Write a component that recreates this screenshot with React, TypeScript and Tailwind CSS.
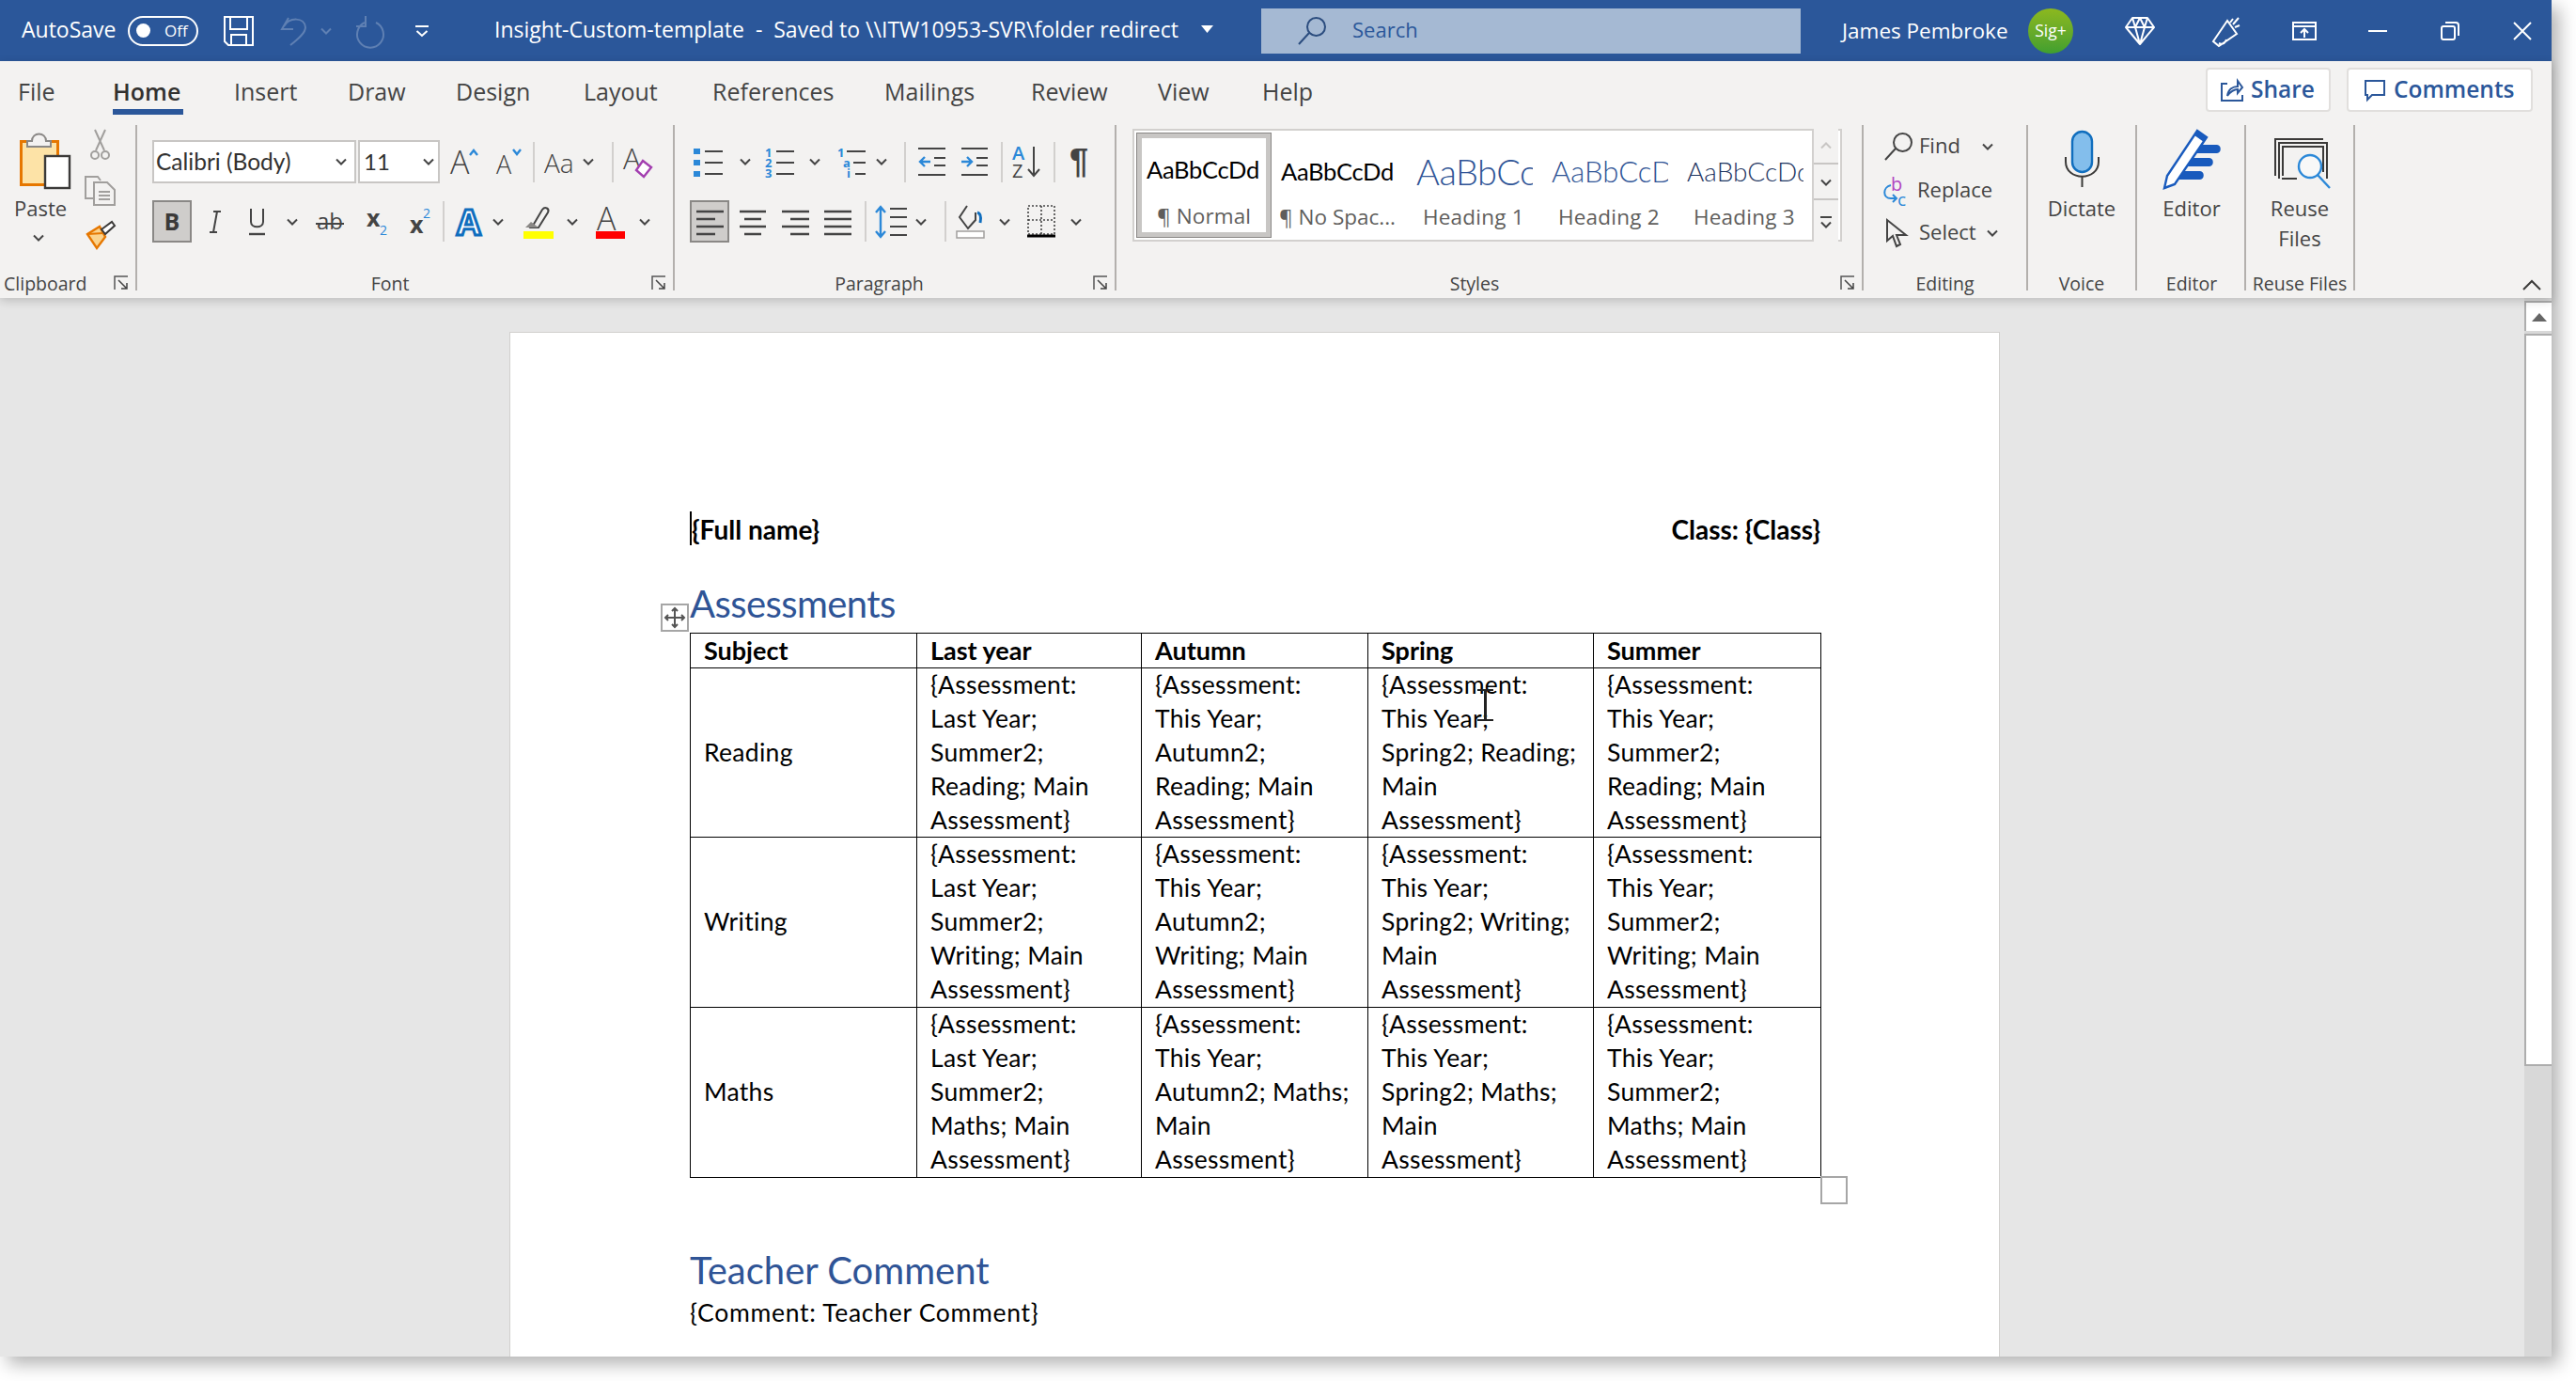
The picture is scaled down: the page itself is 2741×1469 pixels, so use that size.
import React from "react";

const D = "#444444";
const BL = "#2b88d8";
const F = "Open Sans, sans-serif";

function Sv({ w, h, cls = "", children }: { w: number; h: number; cls?: string; children?: React.ReactNode }) {
  return (
    <svg width={w} height={h} viewBox={`0 0 ${w} ${h}`} fill="none" className={`block shrink-0 overflow-visible ${cls}`}>
      {children}
    </svg>
  );
}
const Chev = ({ cls = "", color = D }: { cls?: string; color?: string }) => (
  <Sv w={12} h={8} cls={cls}><path d="M1 1.5L6 6.5L11 1.5" stroke={color} strokeWidth="2" /></Sv>
);
const Launcher = ({ cls = "" }: { cls?: string }) => (
  <Sv w={16} h={16} cls={cls}><path d="M1 15V1H15" stroke="#555" strokeWidth="1.5" /><path d="M5 5L14 14M14 8V14H8" stroke="#444" strokeWidth="1.5" /></Sv>
);
const Sep1 = ({ cls = "" }: { cls?: string }) => <div className={`w-[2px] h-[43px] bg-[#d2d0ce] shrink-0 ${cls}`} />;

const Lines = ({ d }: { d: string }) => <Sv w={29} h={28}><path d={d} stroke={D} strokeWidth="2.4" /></Sv>;

function TitleBar() {
  return (
    <div className="h-[65px] bg-[#2b579a] flex items-center text-white shrink-0 text-[23px]">
      <span className="ml-[23px] w-[100px] whitespace-nowrap -mt-[2px]">AutoSave</span>
      <div className="ml-[13px] w-[75px] h-[32px] rounded-full border-2 border-white flex items-center shrink-0">
        <div className="ml-[7px] w-[15px] h-[15px] rounded-full bg-white" />
        <span className="ml-[15px] text-[17px] leading-none">Off</span>
      </div>
      <Sv w={32} h={32} cls="ml-[27px]">
        <path d="M1 1H31V31H5L1 27Z" stroke="#fff" strokeWidth="2" />
        <path d="M7 1V14H25V1M8 31V20H24V31" stroke="#fff" strokeWidth="2" />
      </Sv>
      <Sv w={28} h={32} cls="ml-[28px]">
        <path d="M9 2L2 14H14M4 11C10 1 26 1 27 12C27 18 20 24 11 31" stroke="#5f80b3" strokeWidth="2" />
      </Sv>
      <Chev cls="ml-[15px]" color="#5f80b3" />
      <Sv w={32} h={32} cls="ml-[23px]">
        <path d="M12 7A14 14 0 1 0 24 7M13 0V11H3" stroke="#5f80b3" strokeWidth="2" />
      </Sv>
      <Sv w={14} h={14} cls="ml-[34px]"><path d="M0 2H14M1.5 7L7 12L12.5 7" stroke="#fff" strokeWidth="2" /></Sv>
      <span className="ml-[70px] w-[739px] whitespace-pre -mt-[3px]">Insight-Custom-template  -  Saved to \\ITW10953-SVR\folder redirect</span>
      <Sv w={13} h={8} cls="ml-[13px] -mt-[3px]"><path d="M0 0H13L6.5 8Z" fill="#fff" /></Sv>
      <div className="ml-[51px] w-[574px] h-[48px] bg-[#a5b9d3] flex items-center shrink-0 text-[#2b579a]">
        <Sv w={30} h={30} cls="ml-[39px]">
          <circle cx="19.5" cy="10.5" r="9.5" stroke="#2b4c7e" strokeWidth="2" />
          <path d="M12 17L1 29" stroke="#2b4c7e" strokeWidth="2" />
        </Sv>
        <span className="ml-[28px] text-[22px] -mt-[2px]">Search</span>
      </div>
      <span className="ml-[44px] w-[179px] whitespace-nowrap text-[22.5px]">James Pembroke</span>
      <div className="ml-[19px] w-[48px] h-[48px] rounded-full bg-gradient-to-b from-[#8cb81e] to-[#3f9f2f] flex items-center justify-center shrink-0 text-[17.5px]">Sig+</div>
      <Sv w={32} h={30} cls="ml-[55px]">
        <path d="M8 1H24L31 11L16 29L1 11ZM1 11H31M11 11L16 29L21 11L16 1L11 11M8 1L11 11M24 1L21 11" stroke="#fff" strokeWidth="2" strokeLinejoin="round" />
      </Sv>
      <Sv w={31} h={32} cls="ml-[61px]">
        <path d="M16 5L1 27L7 32L26 19ZM7 29C9 30 13 31 15 25M19 7L22 3M24 12L29 10M22 9L28 2" stroke="#fff" strokeWidth="2" />
      </Sv>
      <Sv w={26} h={20} cls="ml-[54px]">
        <path d="M1 1H25V19H1ZM1 5H25M13 17V8M9 12L13 8L17 12" stroke="#fff" strokeWidth="2" />
      </Sv>
      <div className="ml-[55px] w-[20px] h-[2px] bg-white shrink-0" />
      <Sv w={20} h={20} cls="ml-[57px]">
        <rect x="1" y="5" width="14" height="14" rx="2" stroke="#fff" strokeWidth="2" />
        <path d="M5 1H16C18 1 19 2 19 4V15" stroke="#fff" strokeWidth="2" />
      </Sv>
      <Sv w={20} h={20} cls="ml-[57px]"><path d="M1 1L19 19M19 1L1 19" stroke="#fff" strokeWidth="2" /></Sv>
    </div>
  );
}

const tabs: [string, string][] = [
  ["File", "w-[101px]"], ["Home", "w-[129px]"], ["Insert", "w-[121px]"], ["Draw", "w-[115px]"], ["Design", "w-[136px]"],
  ["Layout", "w-[137px]"], ["References", "w-[183px]"], ["Mailings", "w-[156px]"], ["Review", "w-[135px]"], ["View", "w-[111px]"], ["Help", "w-[60px]"],
];

function TabRow() {
  return (
    <div className="h-[68px] flex items-start pt-[14px] pl-[19px] shrink-0 text-[#444] text-[25px]">
      {tabs.map(([t, w]) => (
        <div key={t} className={`${w} shrink-0 h-[42px]`}>
          <span className={`inline-block h-[42px] leading-[34px] border-b-[6px] whitespace-nowrap ${t === "Home" ? "border-[#2b579a] font-semibold text-[#323130] w-[75px]" : "border-transparent"}`}>{t}</span>
        </div>
      ))}
      <div className="ml-auto flex mt-[-7px] text-[#2b579a] font-semibold text-[24.5px]">
        <div className="w-[133px] h-[47px] bg-white border-2 border-[#e1dfdd] rounded-[4px] flex items-center pl-[14px]">
          <Sv w={24} h={24}><path d="M7 5H1V23H23V17M7 18C8 11 13 8 18 8V2L23 9L18 15V11C13 11 10 14 7 18Z" stroke="#2b579a" strokeWidth="2" /></Sv>
          <span className="ml-[8px]">Share</span>
        </div>
        <div className="ml-[17px] mr-[20px] w-[198px] h-[47px] bg-white border-2 border-[#e1dfdd] rounded-[4px] flex items-center pl-[17px]">
          <Sv w={22} h={22}><path d="M1 1H21V16H8L3 21V16H1Z" stroke="#2b579a" strokeWidth="2" /></Sv>
          <span className="ml-[9px]">Comments</span>
        </div>
      </div>
    </div>
  );
}

function Label({ text, cls = "", launcher = true }: { text: string; cls?: string; launcher?: boolean }) {
  return (
    <div className="h-[24px] -mb-[5px] flex items-center text-[19.5px] leading-[23px] text-[#444] shrink-0">
      <div className={`flex-1 text-center whitespace-nowrap -mt-[1px] ${cls}`}>{text}</div>
      {launcher && <Launcher cls="mr-[7px] -mt-[3px]" />}
    </div>
  );
}

function Group({ w, children }: { w: string; children: React.ReactNode }) {
  return <div className={`${w} h-[176px] flex flex-col border-r-2 border-[#b3b0ad] shrink-0`}>{children}</div>;
}

const Tx = ({ x, y, s, c = D, w = 400, f = F, st, children }: { x: number; y: number; s: number; c?: string; w?: number; f?: string; st?: string; children: React.ReactNode }) => (
  <text x={x} y={y} fontSize={s} fill={c} fontWeight={w} fontFamily={f} fontStyle={st}>{children}</text>
);

function Clipboard() {
  return (
    <Group w="w-[146px]">
      <div className="flex-1 flex min-h-0">
        <div className="w-[90px] flex flex-col items-start shrink-0">
          <Sv w={54} h={59} cls="ml-[21px] mt-[9px]">
            <rect x="1.5" y="8.5" width="39" height="46" fill="#fde3a7" stroke="#e67700" strokeWidth="3" />
            <path d="M8 8H13C13 -2 28 -2 28 8H33V14H8Z" fill="#f3f2f1" stroke="#8a8886" strokeWidth="2" />
            <rect x="27" y="24" width="26" height="34" fill="#fff" stroke="#3b3a39" strokeWidth="2.4" />
          </Sv>
          <span className="ml-[15px] mt-[5px] text-[22px] leading-[30px] text-[#444]">Paste</span>
          <Chev cls="ml-[35px] mt-[13px]" />
        </div>
        <div className="flex flex-col">
          <Sv w={21} h={32} cls="ml-[6px] mt-[5px]">
            <path d="M5 0L15 22M16 0L6 22" stroke="#a19f9d" strokeWidth="2" />
            <circle cx="5" cy="27" r="4" stroke="#a19f9d" strokeWidth="2" />
            <circle cx="16" cy="27" r="4" stroke="#a19f9d" strokeWidth="2" />
          </Sv>
          <Sv w={33} h={32} cls="mt-[17px]">
            <path d="M10 24H1V1H14L17 5" stroke="#a19f9d" strokeWidth="2" />
            <path d="M10 7H24L32 15V31H10Z" fill="#f3f2f1" stroke="#a19f9d" strokeWidth="2" />
            <path d="M15 17H27M15 21H27M15 25H27" stroke="#a19f9d" strokeWidth="2" />
          </Sv>
          <Sv w={31} h={30} cls="ml-[2px] mt-[16px]">
            <path d="M1 14L14 6L20 17L11 29Z" fill="#fbd38d" stroke="#e67700" strokeWidth="2.4" />
            <path d="M1 14L18 13" stroke="#e67700" strokeWidth="2" />
            <path d="M16 9L27 1L30 5L20 14Z" fill="#fff" stroke="#3b3a39" strokeWidth="2" />
          </Sv>
        </div>
      </div>
      <div className="h-[24px] -mb-[5px] flex items-center text-[19.5px] text-[#444] shrink-0">
        <span className="ml-[4px] whitespace-nowrap -mt-[1px]">Clipboard</span>
        <Launcher cls="ml-auto mr-[7px] -mt-[3px]" />
      </div>
    </Group>
  );
}

function FontGroup() {
  return (
    <Group w="w-[572px]">
      <div className="flex-1 min-h-0 pt-[16px] flex flex-col">
        <div className="h-[46px] flex items-center">
          <div className="ml-[16px] w-[217px] h-[46px] bg-white border-2 border-[#c8c6c4] flex items-center justify-between pl-[2px] pr-[4px] text-[#323130] shrink-0">
            <span className="whitespace-nowrap font-['Lato',sans-serif] text-[24.5px]">Calibri (Body)</span><Chev cls="mr-[4px]" />
          </div>
          <div className="ml-[2px] w-[87px] h-[46px] bg-white border-2 border-[#c8c6c4] flex items-center justify-between px-[4px] text-[24px] text-[#323130] shrink-0 font-['Lato',sans-serif]">
            <span>11</span><Chev />
          </div>
          <Sv w={31} h={30} cls="ml-[11px]"><Tx x={0} y={28} s={34} w={300}>A</Tx><path d="M21 8L25 3L29 8" stroke={BL} strokeWidth="2.4" /></Sv>
          <Sv w={27} h={30} cls="ml-[18px]"><Tx x={0} y={28} s={27} w={300}>A</Tx><path d="M18 2L22 7L26 2" stroke={BL} strokeWidth="2.4" /></Sv>
          <Sep1 cls="ml-[12px]" />
          <Sv w={33} h={30} cls="ml-[10px]"><Tx x={0} y={27} s={28} w={300}>Aa</Tx></Sv>
          <Chev cls="ml-[8px]" />
          <Sep1 cls="ml-[19px]" />
          <Sv w={31} h={34} cls="ml-[10px]">
            <Tx x={0} y={25} s={31} w={300}>A</Tx>
            <path d="M21 16L30 23L22 33L14 26Z" fill="#fff" stroke="#a33fb0" strokeWidth="2.4" />
          </Sv>
        </div>
        <div className="h-[45px] mt-[18px] flex items-center">
          <div className="ml-[16px] w-[42px] h-[45px] bg-[#cfcdcb] border-2 border-[#8a8886] flex items-center justify-center text-[25px] font-bold text-[#3b3a39] shrink-0">B</div>
          <Sv w={14} h={26} cls="ml-[18px]"><path d="M5 2H13M1 24H9M9 2L5 24" stroke={D} strokeWidth="2" /></Sv>
          <Sv w={17} h={32} cls="ml-[29px]"><path d="M2 2V16C2 23 15 23 15 16V2" stroke={D} strokeWidth="2" /><path d="M0 29H17" stroke={D} strokeWidth="2.4" /></Sv>
          <Chev cls="ml-[23px]" />
          <Sv w={30} h={28} cls="ml-[19px]"><Tx x={1} y={22} s={24}>ab</Tx><path d="M0 16H30" stroke={D} strokeWidth="2" /></Sv>
          <Sv w={22} h={30} cls="ml-[24px]"><Tx x={0} y={20} s={25} w={700}>x</Tx><Tx x={14} y={29} s={14} c={BL}>2</Tx></Sv>
          <Sv w={22} h={30} cls="ml-[24px]"><Tx x={0} y={27} s={25} w={700}>x</Tx><Tx x={14} y={11} s={14} c={BL}>2</Tx></Sv>
          <Sep1 cls="ml-[13px]" />
          <Sv w={32} h={32} cls="ml-[10px]"><text x={3} y={30} fontSize={37} fontWeight={700} fontFamily={F} fill="#fff" stroke="#106ebe" strokeWidth="3">A</text></Sv>
          <Chev cls="ml-[9px]" />
          <div className="ml-[21px] w-[32px] h-[36px] flex flex-col justify-end shrink-0">
            <Sv w={32} h={26}><path d="M10 20L20 3C23 -1 28 2 26 6L16 22H8Z" stroke={D} strokeWidth="2" /><path d="M8 16L16 22H2Z" fill="#8a8886" /></Sv>
            <div className="h-[8px] bg-[#ffff00] w-[32px]" />
          </div>
          <Chev cls="ml-[14px]" />
          <div className="ml-[19px] w-[31px] h-[36px] flex flex-col justify-end shrink-0">
            <Sv w={31} h={27}><Tx x={1} y={26} s={34} w={300}>A</Tx></Sv>
            <div className="h-[8px] bg-[#ff0000] w-[31px]" />
          </div>
          <Chev cls="ml-[15px]" />
        </div>
      </div>
      <Label text="Font" cls="pr-[9px]" />
    </Group>
  );
}

function ParagraphGroup() {
  const nb = { s: 13, c: BL, w: 700 };
  return (
    <Group w="w-[470px]">
      <div className="flex-1 min-h-0 pt-[16px] flex flex-col">
        <div className="h-[46px] flex items-center">
          <Sv w={31} h={32} cls="ml-[20px]">
            <path d="M0 2H7V8H0ZM0 14H7V20H0ZM0 26H7V32H0Z" fill={BL} />
            <path d="M12 5H31M12 17H31M12 29H31" stroke={D} strokeWidth="2" />
          </Sv>
          <Chev cls="ml-[18px]" />
          <Sv w={31} h={34} cls="ml-[15px]">
            <Tx x={0} y={12} {...nb}>1</Tx><Tx x={0} y={23} {...nb}>2</Tx><Tx x={0} y={34} {...nb}>3</Tx>
            <path d="M12 6H31M12 18H31M12 30H31" stroke={D} strokeWidth="2" />
          </Sv>
          <Chev cls="ml-[16px]" />
          <Sv w={30} h={34} cls="ml-[18px]">
            <Tx x={0} y={12} {...nb}>1</Tx><Tx x={6} y={23} {...nb}>a</Tx><Tx x={10} y={34} {...nb}>i</Tx>
            <path d="M10 6H30M17 18H30M19 30H30" stroke={D} strokeWidth="2" />
          </Sv>
          <Chev cls="ml-[11px]" />
          <Sep1 cls="ml-[18px]" />
          <Sv w={29} h={32} cls="ml-[13px]">
            <path d="M0 2H29M17 12H29M17 20H29M0 30H29" stroke={D} strokeWidth="2.2" />
            <path d="M13 16H2M7 11L2 16L7 21" stroke={BL} strokeWidth="2.4" />
          </Sv>
          <Sv w={28} h={32} cls="ml-[17px]">
            <path d="M0 2H28M16 12H28M16 20H28M0 30H28" stroke={D} strokeWidth="2.2" />
            <path d="M0 16H11M6 11L11 16L6 21" stroke={BL} strokeWidth="2.4" />
          </Sv>
          <Sep1 cls="ml-[14px]" />
          <Sv w={33} h={36} cls="ml-[10px]">
            <Tx x={0} y={16} s={20} c={BL} w={600}>A</Tx>
            <Tx x={0} y={35} s={20} w={400}>Z</Tx>
            <path d="M23 2V32M17 26L23 33L29 26" stroke={D} strokeWidth="2" />
          </Sv>
          <Sep1 cls="ml-[11px]" />
          <span className="ml-[15px] text-[36px] leading-none font-bold text-[#444] font-['Liberation_Sans',sans-serif]">¶</span>
        </div>
        <div className="h-[45px] mt-[18px] flex items-center">
          <div className="ml-[16px] w-[42px] h-[45px] bg-[#cfcdcb] border-2 border-[#8a8886] flex items-center justify-center shrink-0">
            <Sv w={29} h={28}><path d="M0 3H29M0 11H20M0 19H29M0 27H20" stroke={D} strokeWidth="2.4" /></Sv>
          </div>
          <div className="ml-[11px]"><Lines d="M0 3H28M5 11H23M0 19H28M5 27H23" /></div>
          <div className="ml-[16px]"><Lines d="M0 3H29M9 11H29M0 19H29M9 27H29" /></div>
          <div className="ml-[16px]"><Lines d="M0 3H29M0 11H29M0 19H29M0 27H29" /></div>
          <Sep1 cls="ml-[14px]" />
          <Sv w={33} h={36} cls="ml-[10px]">
            <path d="M5 3V33M0 8L5 2L10 8M0 28L5 34L10 28" stroke={BL} strokeWidth="2.4" />
            <path d="M15 4H33M15 13H33M15 23H33M15 32H33" stroke={D} strokeWidth="2.2" />
          </Sv>
          <Chev cls="ml-[9px]" />
          <Sep1 cls="ml-[19px]" />
          <Sv w={31} h={36} cls="ml-[10px]">
            <path d="M12 1L4 13L13 25L21 16V8" stroke={D} strokeWidth="2" />
            <path d="M23 8C27 9 27 14 26 19" stroke="#106ebe" strokeWidth="3" />
            <rect x="1" y="28" width="29" height="7" fill="#fff" stroke="#a19f9d" strokeWidth="1.5" />
          </Sv>
          <Chev cls="ml-[15px]" />
          <Sv w={30} h={36} cls="ml-[18px]">
            <path d="M1 1H29V31H1ZM15 1V31M1 16H29" stroke="#444" strokeWidth="1.6" strokeDasharray="2 2" />
            <path d="M0 33H30" stroke="#000" strokeWidth="3" />
          </Sv>
          <Chev cls="ml-[16px]" />
        </div>
      </div>
      <Label text="Paragraph" cls="pr-[10px]" />
    </Group>
  );
}

const StyleCell = ({ sample, label, cls, lab = "pl-[17px] tracking-[0.2px]", sel = false }: { sample: string; label: string; cls: string; lab?: string; sel?: boolean }) => (
  <div className={`w-[144px] shrink-0 overflow-hidden h-full flex flex-col ${sel ? "border-[6px] border-[#c8c6c4] outline-1 outline-[#8a8886] -outline-offset-1" : ""}`}>
    <div className={`flex items-center whitespace-nowrap overflow-hidden ${sel ? "pl-[5px] pt-[4px] h-[62px]" : "h-[82px] pl-[10px] mr-[10px]"} font-['Lato',sans-serif] ${cls}`}>{sample}</div>
    <div className={`text-[22.5px] leading-[30px] text-[#605e5c] whitespace-nowrap ${sel ? "mt-[6px]" : "-mt-[7px]"} ${lab}`}>{label}</div>
  </div>
);

function StylesGroup() {
  return (
    <Group w="w-[795px]">
      <div className="flex-1 min-h-0 pt-[4px]">
        <div className="ml-[17px] w-[755px] h-[120px] bg-white border-2 border-[#d2d0ce] flex pl-[2px] pt-[2px]">
          <div className="h-[112px] flex">
            <StyleCell sel sample="AaBbCcDd" label="¶ Normal" lab="pl-[16px] tracking-[0.1px]" cls="text-[25.5px] text-black tracking-[-0.3px]" />
            <StyleCell sample="AaBbCcDd" label="¶ No Spac..." lab="pl-[8px]" cls="text-[25.5px] text-black tracking-[-0.3px]" />
            <StyleCell sample="AaBbCcDd" label="Heading 1" cls="text-[38px] font-light text-[#2f5496] tracking-[-0.5px]" />
            <StyleCell sample="AaBbCcDd" label="Heading 2" cls="text-[31px] font-light text-[#2f5496]" />
            <StyleCell sample="AaBbCcDd" label="Heading 3" cls="text-[28px] font-light text-[#1f3763]" />
          </div>
          <div className="w-[28px] h-[120px] -mt-[4px] ml-[-1px] flex flex-col bg-[#f3f2f1] border-l-2 border-[#d2d0ce] shrink-0 gap-[2px]">
            <div className="h-[38px] flex items-center justify-center border-b-2 border-[#c8c6c4]"><Chev cls="rotate-180" color="#c8c6c4" /></div>
            <div className="h-[36px] flex items-center justify-center border-b-2 border-[#c8c6c4]"><Chev /></div>
            <div className="flex-1 flex flex-col items-center justify-center gap-[3px]"><div className="w-[12px] h-[2px] bg-[#444]" /><Chev /></div>
          </div>
        </div>
      </div>
      <Label text="Styles" cls="pr-[8px]" />
    </Group>
  );
}

function EditingGroup() {
  return (
    <Group w="w-[175px]">
      <div className="flex-1 min-h-0 text-[22px] text-[#444]">
        <div className="h-[46px] flex items-center">
          <Sv w={30} h={30} cls="ml-[22px]"><circle cx="19.5" cy="10.5" r="9.5" stroke={D} strokeWidth="2" /><path d="M12 17L1 29" stroke={D} strokeWidth="2" /></Sv>
          <span className="ml-[7px] w-[67px] -mt-[3px]">Find</span><Chev />
        </div>
        <div className="h-[47px] flex items-center">
          <Sv w={28} h={32} cls="ml-[20px]">
            <Tx x={9} y={16} s={20} c="#b146c2">b</Tx><Tx x={16} y={32} s={19} c={BL}>c</Tx>
            <path d="M9 10C0 12 0 24 9 24H15M11 20L15 24L11 28" stroke={BL} strokeWidth="2" />
          </Sv>
          <span className="ml-[9px] -mt-[3px]">Replace</span>
        </div>
        <div className="h-[44px] flex items-center">
          <Sv w={22} h={30} cls="ml-[24px]"><path d="M1 1V23L7 18L11 29L15 27L11 17H21Z" stroke={D} strokeWidth="2" /></Sv>
          <span className="ml-[13px] w-[72px] -mt-[3px]">Select</span><Chev />
        </div>
      </div>
      <Label text="Editing" launcher={false} />
    </Group>
  );
}

function Ribbon() {
  return (
    <div className="h-[252px] bg-[#f3f2f1] flex flex-col shrink-0 relative z-10 shadow-[0_3px_10px_rgba(0,0,0,0.18)]">
      <TabRow />
      <div className="flex h-[176px]">
        <Clipboard />
        <FontGroup />
        <ParagraphGroup />
        <StylesGroup />
        <EditingGroup />
        <Group w="w-[116px]">
          <div className="flex-1 min-h-0 flex flex-col items-center pt-[6px] text-[22px] leading-[32px] text-[#444]">
            <Sv w={37} h={60}>
              <rect x="8" y="1" width="21" height="43" rx="10.5" fill="#83beec" stroke="#106ebe" strokeWidth="2.4" />
              <path d="M1 28V33C1 54 36 54 36 33V28M18.5 48V60" stroke="#3b3a39" strokeWidth="2" />
            </Sv>
            <div className="mt-[6px]">Dictate</div>
          </div>
          <Label text="Voice" launcher={false} />
        </Group>
        <Group w="w-[116px]">
          <div className="flex-1 min-h-0 flex flex-col items-center pt-[5px] text-[22px] leading-[32px] text-[#444]">
            <Sv w={62} h={62} cls="ml-[4px]">
              <path d="M30 16H57C62 16 62 25 57 25H25ZM22 30H49C54 30 54 39 49 39H17ZM14 44H39C44 44 44 53 39 53H10Z" fill="#185abd" />
              <path d="M36 1L46 8L12 58L1 62L4 49Z" fill="#fff" stroke="#185abd" strokeWidth="2.4" />
              <path d="M36 1L46 8L43 13L33 6Z" fill="#185abd" />
            </Sv>
            <div className="mt-[5px] ml-[2px]">Editor</div>
          </div>
          <Label text="Editor" launcher={false} cls="pl-[2px]" />
        </Group>
        <Group w="w-[116px]">
          <div className="flex-1 min-h-0 flex flex-col items-center pt-[14px] text-[22px] leading-[32px] text-[#444]">
            <Sv w={60} h={54} cls="ml-[6px]">
              <path d="M1 40V1H52M5 43V5H56V43M9 40V9H52V36" stroke="#3b3a39" strokeWidth="2" />
              <path d="M8 43H24" stroke="#3b3a39" strokeWidth="2" />
              <circle cx="38" cy="30" r="12" fill="#f8f8f8" stroke={BL} strokeWidth="2.4" />
              <path d="M46 39L59 53" stroke={BL} strokeWidth="2.4" />
            </Sv>
            <div className="mt-[4px] text-center">Reuse<br />Files</div>
          </div>
          <Label text="Reuse Files" launcher={false} />
        </Group>
        <div className="flex-1 flex justify-end items-end">
          <Sv w={20} h={11} cls="mr-[11px]"><path d="M1 10L10 1L19 10" stroke="#3b3a39" strokeWidth="2" /></Sv>
        </div>
      </div>
    </div>
  );
}

const rows: { name: string; cols: string[][] }[] = [
  {
    name: "Reading",
    cols: [
      ["{Assessment:", "Last Year;", "Summer2;", "Reading; Main", "Assessment}"],
      ["{Assessment:", "This Year;", "Autumn2;", "Reading; Main", "Assessment}"],
      ["{Assessment:", "This Year;", "Spring2; Reading;", "Main", "Assessment}"],
      ["{Assessment:", "This Year;", "Summer2;", "Reading; Main", "Assessment}"],
    ],
  },
  {
    name: "Writing",
    cols: [
      ["{Assessment:", "Last Year;", "Summer2;", "Writing; Main", "Assessment}"],
      ["{Assessment:", "This Year;", "Autumn2;", "Writing; Main", "Assessment}"],
      ["{Assessment:", "This Year;", "Spring2; Writing;", "Main", "Assessment}"],
      ["{Assessment:", "This Year;", "Summer2;", "Writing; Main", "Assessment}"],
    ],
  },
  {
    name: "Maths",
    cols: [
      ["{Assessment:", "Last Year;", "Summer2;", "Maths; Main", "Assessment}"],
      ["{Assessment:", "This Year;", "Autumn2; Maths;", "Main", "Assessment}"],
      ["{Assessment:", "This Year;", "Spring2; Maths;", "Main", "Assessment}"],
      ["{Assessment:", "This Year;", "Summer2;", "Maths; Main", "Assessment}"],
    ],
  },
];

function Doc() {
  return (
    <div className="flex-1 min-h-0 bg-[#e6e6e6] flex overflow-hidden">
      <div className="flex-1 min-w-0 pt-[36px] pl-[542px]">
        <div className="w-[1586px] h-[1200px] bg-white border-l border-r border-t border-[#d2d0ce] pt-[192px] pl-[191px] font-['Lato',sans-serif] text-black text-[26.5px] leading-[35.9px] tracking-[0.3px]">
          <div className="w-[1203px] h-[36px] flex justify-between font-bold text-[28px] tracking-[0px] relative">
            <div className="absolute left-0 top-[-2px] w-[2px] h-[36px] bg-black" />
            <span className="pl-[2px]">{"{Full name}"}</span>
            <span>{"Class: {Class}"}</span>
          </div>
          <div className="mt-[35px] text-[40px] leading-[50px] text-[#2f5496] font-normal tracking-[-0.6px]">Assessments</div>
          <div className="mt-[6px] relative w-[1203px]">
            <div className="absolute left-[-31px] top-[-31px] w-[30px] h-[30px] border-2 border-[#a6a6a6] bg-white flex items-center justify-center">
              <Sv w={22} h={22}><path d="M11 1V21M1 11H21M8 4L11 1L14 4M8 18L11 21L14 18M4 8L1 11L4 14M18 8L21 11L18 14" stroke="#555" strokeWidth="2" /></Sv>
            </div>
            <table className="table-fixed border-collapse w-[1203px]">
              <colgroup>
                <col className="w-[241px]" /><col className="w-[239px]" /><col className="w-[241px]" /><col className="w-[240px]" /><col className="w-[242px]" />
              </colgroup>
              <thead>
                <tr className="h-[36px] text-left">
                  {["Subject", "Last year", "Autumn", "Spring", "Summer"].map((h) => (
                    <th key={h} className="border border-black pl-[14px] py-0 font-bold text-[27px] tracking-[0px]">{h}</th>
                  ))}
                </tr>
              </thead>
              <tbody>
                {rows.map((r) => (
                  <tr key={r.name}>
                    <td className="border border-black pl-[14px] align-middle">{r.name}</td>
                    {r.cols.map((c, i) => (
                      <td key={i} className="border border-black pl-[14px] pt-0 whitespace-nowrap">
                        {c.map((l, j) => <div key={j}>{l}</div>)}
                      </td>
                    ))}
                  </tr>
                ))}
              </tbody>
            </table>
            <div className="absolute left-[1203px] top-[578px] w-[29px] h-[30px] border-2 border-[#a6a6a6] bg-white" />
            <div className="absolute left-[845px] top-[60px] w-[3px] h-[34px] bg-[#222]">
              <div className="absolute left-[-7px] top-0 w-[17px] h-[2px] bg-[#222]" />
              <div className="absolute left-[-7px] bottom-0 w-[17px] h-[2px] bg-[#222]" />
            </div>
          </div>
          <div className="mt-[73px] text-[40px] leading-[50px] text-[#2f5496] font-normal tracking-[0px]">Teacher Comment</div>
          <div className="mt-[3px] tracking-[0.7px]">{"{Comment: Teacher Comment}"}</div>
        </div>
      </div>
      <div className="w-[29px] shrink-0 flex flex-col bg-[#d8d8d8] pt-[3px]">
        <div className="h-[32px] bg-white border-l-2 border-t-2 border-[#adadad] flex items-center justify-center shrink-0">
          <Sv w={16} h={9}><path d="M8 0L16 9H0Z" fill="#666" /></Sv>
        </div>
        <div className="h-[779px] mt-[3px] bg-white border-l-2 border-t-2 border-b-2 border-[#adadad] shrink-0" />
      </div>
    </div>
  );
}

export default function App() {
  return (
    <div className="w-[2741px] h-[1469px] bg-white overflow-hidden font-['Open_Sans',sans-serif]">
      <div className="w-[2715px] h-[1443px] flex flex-col shadow-[8px_8px_18px_rgba(0,0,0,0.3)]">
        <TitleBar />
        <Ribbon />
        <Doc />
      </div>
    </div>
  );
}
